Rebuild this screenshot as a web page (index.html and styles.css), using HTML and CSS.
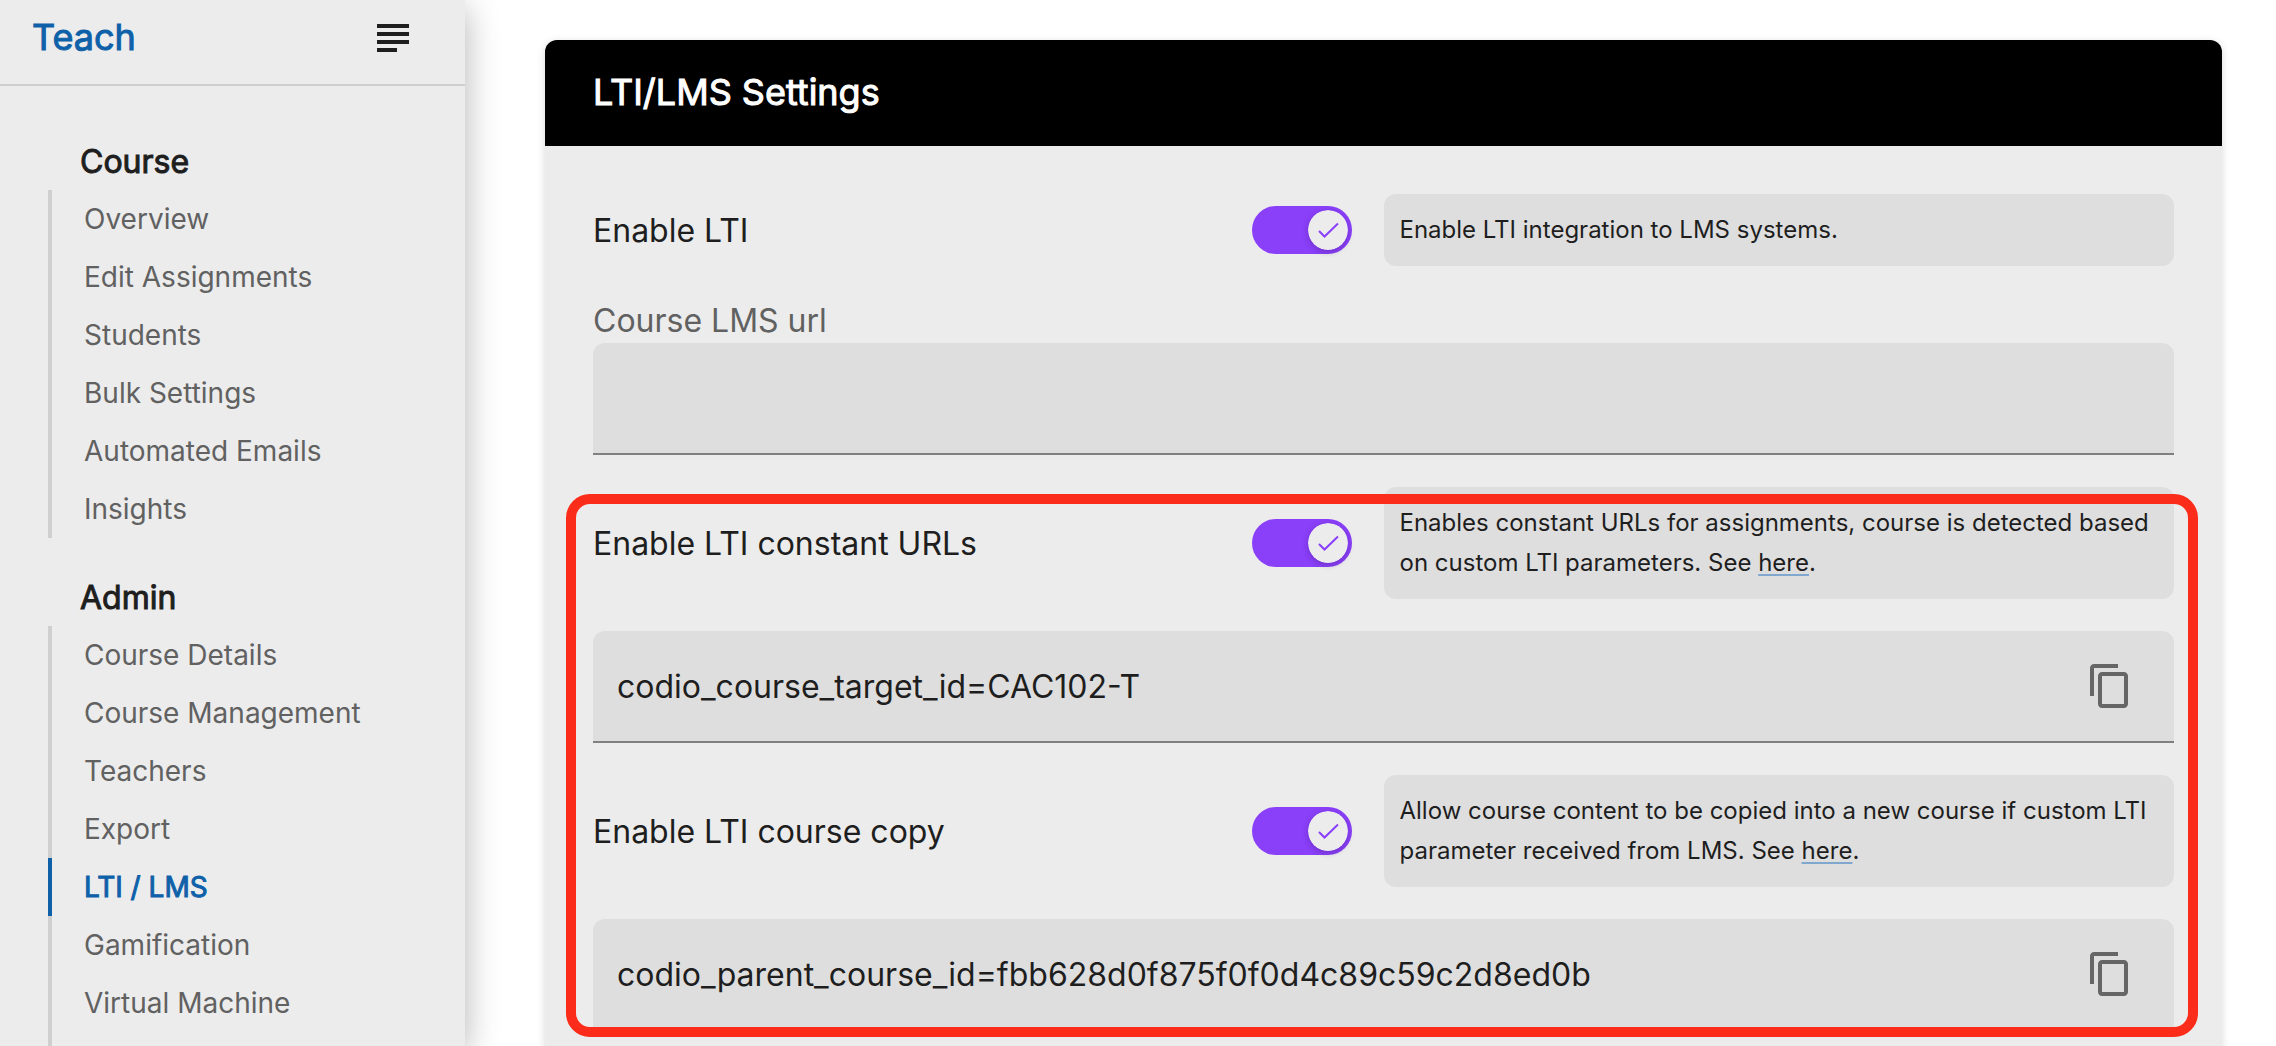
FILE: index.html
```html
<!DOCTYPE html>
<html lang="en">
<head>
    <meta charset="UTF-8">
    <meta name="viewport" content="width=device-width, initial-scale=1.0">
    <title>LTI/LMS Settings</title>
    <link rel="stylesheet" href="styles.css">
</head>
<body>
    <aside class="sidebar">
        <div class="sidebar-header">
            <a class="brand" href="#">Teach</a>
            <button class="menu-button" type="button" aria-label="Toggle menu">
                <svg width="32" height="28" viewBox="0 0 32 28" fill="currentColor">
                    <path d="M0 0h32v4H0zM0 8h32v4H0zM0 16h32v4H0zM0 24h20v4H0z"/>
                </svg>
            </button>
        </div>
        <nav class="sidebar-nav">
            <section class="nav-section">
                <h2>Course</h2>
                <ul>
                    <li><a href="#">Overview</a></li>
                    <li><a href="#">Edit Assignments</a></li>
                    <li><a href="#">Students</a></li>
                    <li><a href="#">Bulk Settings</a></li>
                    <li><a href="#">Automated Emails</a></li>
                    <li><a href="#">Insights</a></li>
                </ul>
            </section>
            <section class="nav-section nav-section-last">
                <h2>Admin</h2>
                <ul>
                    <li><a href="#">Course Details</a></li>
                    <li><a href="#">Course Management</a></li>
                    <li><a href="#">Teachers</a></li>
                    <li><a href="#">Export</a></li>
                    <li class="active"><a href="#">LTI / LMS</a></li>
                    <li><a href="#">Gamification</a></li>
                    <li><a href="#">Virtual Machine</a></li>
                </ul>
            </section>
        </nav>
    </aside>

    <main class="content">
        <div class="card">
            <h1 class="card-header">LTI/LMS Settings</h1>
            <form class="card-body">
                <div class="setting">
                    <label class="setting-label" for="enableLti">Enable LTI</label>
                    <span class="switch">
                        <input type="checkbox" id="enableLti" checked>
                        <svg class="knob" viewBox="0 0 40 40"><circle cx="20" cy="20" r="20"/><path d="M11 21l5.500 5.500L30 13.500"/></svg>
                    </span>
                    <p class="hint">Enable LTI integration to LMS systems.</p>
                </div>

                <div class="field-group">
                    <label class="field-label" for="lmsUrl">Course LMS url</label>
                    <div class="field">
                        <input type="text" id="lmsUrl">
                    </div>
                </div>

                <div class="highlight">
                    <div class="setting">
                        <label class="setting-label" for="constantUrls">Enable LTI constant URLs</label>
                        <span class="switch">
                            <input type="checkbox" id="constantUrls" checked>
                            <svg class="knob" viewBox="0 0 40 40"><circle cx="20" cy="20" r="20"/><path d="M11 21l5.500 5.500L30 13.500"/></svg>
                        </span>
                        <p class="hint">Enables constant URLs for assignments, course is detected based on custom LTI parameters. See <a href="#">here</a>.</p>
                    </div>

                    <div class="field">
                        <input type="text" aria-label="Course target id" value="codio_course_target_id=CAC102-T" readonly>
                        <button class="copy-button" type="button" aria-label="Copy">
                            <svg width="48" height="48" viewBox="0 0 24 24" fill="currentColor">
                                <path d="M16 1H4c-1.100 0-2 .9-2 2v14h2V3h12V1zm3 4H8c-1.100 0-2 .9-2 2v14c0 1.100.9 2 2 2h11c1.100 0 2-.9 2-2V7c0-1.100-.9-2-2-2zm0 16H8V7h11v14z"/>
                            </svg>
                        </button>
                    </div>

                    <div class="setting">
                        <label class="setting-label" for="courseCopy">Enable LTI course copy</label>
                        <span class="switch">
                            <input type="checkbox" id="courseCopy" checked>
                            <svg class="knob" viewBox="0 0 40 40"><circle cx="20" cy="20" r="20"/><path d="M11 21l5.500 5.500L30 13.500"/></svg>
                        </span>
                        <p class="hint">Allow course content to be copied into a new course if custom LTI parameter received from LMS. See <a href="#">here</a>.</p>
                    </div>

                    <div class="field">
                        <input type="text" aria-label="Parent course id" value="codio_parent_course_id=fbb628d0f875f0f0d4c89c59c2d8ed0b" readonly>
                        <button class="copy-button" type="button" aria-label="Copy">
                            <svg width="48" height="48" viewBox="0 0 24 24" fill="currentColor">
                                <path d="M16 1H4c-1.100 0-2 .9-2 2v14h2V3h12V1zm3 4H8c-1.100 0-2 .9-2 2v14c0 1.100.9 2 2 2h11c1.100 0 2-.9 2-2V7c0-1.100-.9-2-2-2zm0 16H8V7h11v14z"/>
                            </svg>
                        </button>
                    </div>
                </div>
            </form>
        </div>
    </main>
</body>
</html>
```

FILE: styles.css
```css
* {
    box-sizing: border-box;
}

body {
    font-family: Inter, "Liberation Sans", sans-serif;
    font-size: 32px;
    color: #1e1e1e;
    background-color: #fff;
    margin: 0;
    display: flex;
    height: 100vh;
    overflow: hidden;
}

h1, h2, p, ul {
    margin: 0;
    padding: 0;
}

button {
    padding: 0;
    border: none;
    background: none;
    cursor: pointer;
}

svg {
    display: block;
}

/* Headings use the regular weight with a thin outline */
.brand,
.card-header,
.nav-section h2,
.nav-section .active a {
    font-weight: 400;
    -webkit-text-stroke: 1px currentColor;
}

/* Sidebar */
.sidebar {
    display: flex;
    flex-direction: column;
    flex: 0 0 465px;
    background-color: #ececec;
    box-shadow: 0 8px 32px rgba(0, 0, 0, 0.3);
}

.sidebar-header {
    display: flex;
    justify-content: space-between;
    align-items: flex-start;
    height: 86px;
    padding: 16px 56px 0 32px;
    border-bottom: 2px solid #cfcfcf;
}

.brand {
    font-size: 36px;
    line-height: 42px;
    color: #0e61a9;
    text-decoration: none;
}

.menu-button {
    padding-top: 8px;
    color: #1e1e1e;
}

.sidebar-nav {
    display: flex;
    flex-direction: column;
    flex: 1;
    gap: 40px;
    padding: 56px 0 0 48px;
}

.nav-section h2 {
    font-size: 32px;
    line-height: 40px;
    padding-left: 32px;
    margin-bottom: 8px;
}

.nav-section ul {
    list-style: none;
}

.nav-section-last {
    display: flex;
    flex-direction: column;
    flex: 1;
}

.nav-section-last ul {
    flex: 1;
    border-left: 4px solid #cfcfcf;
}

.nav-section-last li {
    margin-left: -4px;
}

.nav-section li {
    border-left: 4px solid #cfcfcf;
}

.nav-section a {
    display: block;
    padding-left: 32px;
    font-size: 28px;
    line-height: 58px;
    color: #616161;
    text-decoration: none;
}

.nav-section .active {
    border-left-color: #0e61a9;
}

.nav-section .active a {
    color: #0e61a9;
}

/* Settings card */
.content {
    flex: 1;
    min-width: 0;
    padding: 40px 54px 0 80px;
}

.card {
    min-height: 100%;
    border-radius: 12px;
    background-color: #ececec;
    box-shadow: 0 2px 8px rgba(0, 0, 0, 0.15);
}

.card-header {
    padding: 0 48px 2px;
    font-size: 36px;
    line-height: 104px;
    color: #fff;
    background-color: #000;
    border-radius: 12px 12px 0 0;
}

.card-body {
    display: flex;
    flex-direction: column;
    gap: 32px;
    padding: 48px;
}

.setting {
    display: flex;
    align-items: center;
}

.setting-label {
    flex: 1;
}

/* The knob is stacked over the checkbox track in one grid cell */
.switch {
    display: grid;
    align-items: center;
    margin-right: 32px;
}

.switch input {
    grid-area: 1 / 1;
    appearance: none;
    width: 100px;
    height: 48px;
    margin: 0;
    border-radius: 24px;
    background-color: #9e9e9e;
    cursor: pointer;
}

.switch input:checked {
    background-color: #8a3ff9;
}

.knob {
    grid-area: 1 / 1;
    width: 40px;
    height: 40px;
    margin: 0 4px;
    border-radius: 50%;
    box-shadow: 0 2px 6px rgba(0, 0, 0, 0.2);
    pointer-events: none;
}

.switch input:checked + .knob {
    justify-self: end;
}

.knob circle {
    fill: #ececec;
}

.knob path {
    fill: none;
    stroke: #8a3ff9;
    stroke-width: 2;
}

.hint {
    width: 50%;
    padding: 16px;
    border-radius: 12px;
    font-size: 24px;
    line-height: 40px;
    background-color: #dedede;
}

.hint a {
    color: inherit;
    text-decoration: underline;
    text-decoration-color: #80a8cf;
    text-decoration-thickness: 2px;
    text-underline-offset: 3px;
    text-decoration-skip-ink: none;
}

.field-label {
    display: block;
    line-height: 45px;
    color: #616161;
}

.field {
    display: flex;
    align-items: center;
    height: 112px;
    border-bottom: 2px solid #808080;
    border-radius: 12px 12px 0 0;
    background-color: #dedede;
}

.field input {
    flex: 1;
    min-width: 0;
    height: 100%;
    padding: 0 24px;
    border: none;
    outline: none;
    background: none;
    font: inherit;
    color: inherit;
}

.copy-button {
    margin-right: 40px;
    color: #666;
}

/* Red frame around the constant URL and course copy settings */
.highlight {
    position: relative;
    display: flex;
    flex-direction: column;
    gap: 32px;
}

.highlight::after {
    content: "";
    position: absolute;
    inset: 7px -24px -6px -27px;
    border: 10px solid #fb2c1a;
    border-radius: 24px;
    pointer-events: none;
}

@media (max-width: 1200px) {
    .sidebar {
        flex-basis: 360px;
    }

    .content {
        padding: 24px;
    }
}
```
